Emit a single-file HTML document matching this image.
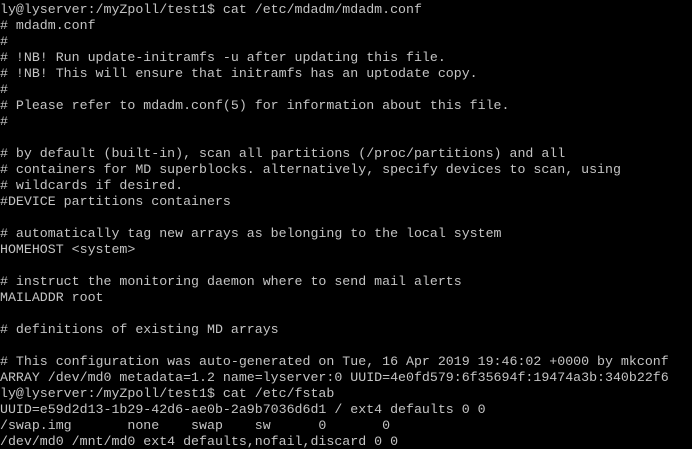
<!DOCTYPE html>
<html><head><meta charset="utf-8"><style>
html,body{margin:0;padding:0;background:#000;width:692px;height:449px;overflow:hidden}
pre{margin:0;padding:2px 0 0 0;font-family:"Liberation Mono","DejaVu Sans Mono",monospace;font-size:13.28px;line-height:16px;color:#c4c4c4;white-space:pre;}
</style></head><body><pre>ly@lyserver:/myZpoll/test1$ cat /etc/mdadm/mdadm.conf
# mdadm.conf
#
# !NB! Run update-initramfs -u after updating this file.
# !NB! This will ensure that initramfs has an uptodate copy.
#
# Please refer to mdadm.conf(5) for information about this file.
#

# by default (built-in), scan all partitions (/proc/partitions) and all
# containers for MD superblocks. alternatively, specify devices to scan, using
# wildcards if desired.
#DEVICE partitions containers

# automatically tag new arrays as belonging to the local system
HOMEHOST &lt;system&gt;

# instruct the monitoring daemon where to send mail alerts
MAILADDR root

# definitions of existing MD arrays

# This configuration was auto-generated on Tue, 16 Apr 2019 19:46:02 +0000 by mkconf
ARRAY /dev/md0 metadata=1.2 name=lyserver:0 UUID=4e0fd579:6f35694f:19474a3b:340b22f6
ly@lyserver:/myZpoll/test1$ cat /etc/fstab
UUID=e59d2d13-1b29-42d6-ae0b-2a9b7036d6d1 / ext4 defaults 0 0
/swap.img       none    swap    sw      0       0
/dev/md0 /mnt/md0 ext4 defaults,nofail,discard 0 0
</pre></body></html>
